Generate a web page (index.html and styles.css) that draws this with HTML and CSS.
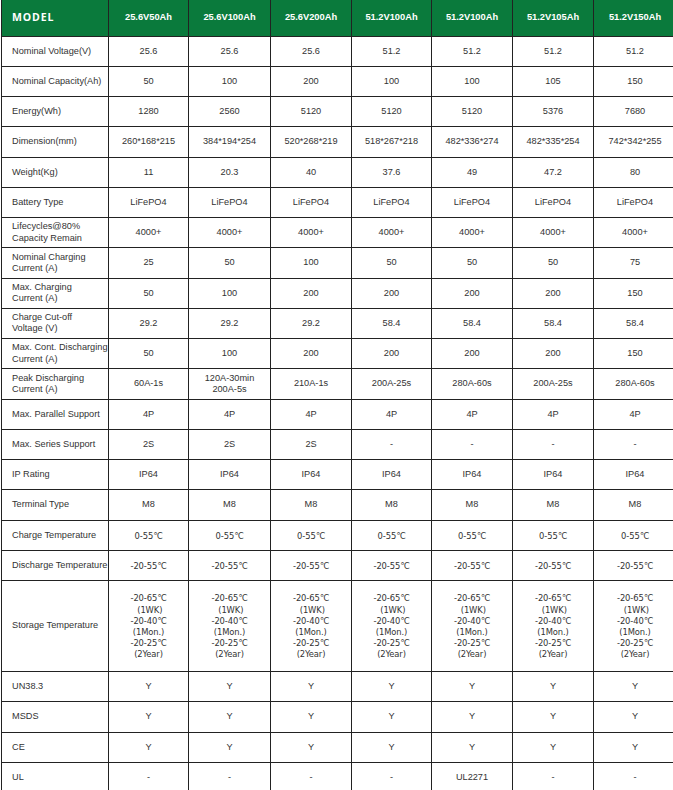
FILE: index.html
```html
<!DOCTYPE html>
<html lang="en">
<head>
<meta charset="utf-8">
<title>Battery Specifications</title>
<link rel="stylesheet" href="styles.css">
</head>
<body>
<table class="spec">
  <colgroup>
    <col class="c-label">
    <col class="c-a"><col class="c-b"><col class="c-c"><col class="c-d"><col class="c-e"><col class="c-f"><col class="c-g">
  </colgroup>
  <thead>
    <tr class="head">
      <th class="model">MODEL</th>
      <th>25.6V50Ah</th>
      <th>25.6V100Ah</th>
      <th>25.6V200Ah</th>
      <th>51.2V100Ah</th>
      <th>51.2V100Ah</th>
      <th>51.2V105Ah</th>
      <th>51.2V150Ah</th>
    </tr>
  </thead>
  <tbody>
    <tr><td>Nominal Voltage(V)</td><td>25.6</td><td>25.6</td><td>25.6</td><td>51.2</td><td>51.2</td><td>51.2</td><td>51.2</td></tr>
    <tr><td>Nominal Capacity(Ah)</td><td>50</td><td>100</td><td>200</td><td>100</td><td>100</td><td>105</td><td>150</td></tr>
    <tr><td>Energy(Wh)</td><td>1280</td><td>2560</td><td>5120</td><td>5120</td><td>5120</td><td>5376</td><td>7680</td></tr>
    <tr><td>Dimension(mm)</td><td>260*168*215</td><td>384*194*254</td><td>520*268*219</td><td>518*267*218</td><td>482*336*274</td><td>482*335*254</td><td>742*342*255</td></tr>
    <tr><td>Weight(Kg)</td><td>11</td><td>20.3</td><td>40</td><td>37.6</td><td>49</td><td>47.2</td><td>80</td></tr>
    <tr><td>Battery Type</td><td>LiFePO4</td><td>LiFePO4</td><td>LiFePO4</td><td>LiFePO4</td><td>LiFePO4</td><td>LiFePO4</td><td>LiFePO4</td></tr>
    <tr><td>Lifecycles@80%<br>Capacity Remain</td><td>4000+</td><td>4000+</td><td>4000+</td><td>4000+</td><td>4000+</td><td>4000+</td><td>4000+</td></tr>
    <tr><td>Nominal Charging<br>Current (A)</td><td>25</td><td>50</td><td>100</td><td>50</td><td>50</td><td>50</td><td>75</td></tr>
    <tr><td>Max. Charging<br>Current (A)</td><td>50</td><td>100</td><td>200</td><td>200</td><td>200</td><td>200</td><td>150</td></tr>
    <tr><td>Charge Cut-off<br>Voltage (V)</td><td>29.2</td><td>29.2</td><td>29.2</td><td>58.4</td><td>58.4</td><td>58.4</td><td>58.4</td></tr>
    <tr><td>Max. Cont. Discharging<br>Current (A)</td><td>50</td><td>100</td><td>200</td><td>200</td><td>200</td><td>200</td><td>150</td></tr>
    <tr><td>Peak Discharging<br>Current (A)</td><td>60A-1s</td><td>120A-30min<br>200A-5s</td><td>210A-1s</td><td>200A-25s</td><td>280A-60s</td><td>200A-25s</td><td>280A-60s</td></tr>
    <tr><td>Max. Parallel Support</td><td>4P</td><td>4P</td><td>4P</td><td>4P</td><td>4P</td><td>4P</td><td>4P</td></tr>
    <tr><td>Max. Series Support</td><td>2S</td><td>2S</td><td>2S</td><td>-</td><td>-</td><td>-</td><td>-</td></tr>
    <tr><td>IP Rating</td><td>IP64</td><td>IP64</td><td>IP64</td><td>IP64</td><td>IP64</td><td>IP64</td><td>IP64</td></tr>
    <tr><td>Terminal Type</td><td>M8</td><td>M8</td><td>M8</td><td>M8</td><td>M8</td><td>M8</td><td>M8</td></tr>
    <tr><td>Charge Temperature</td><td class="temp">0-55℃</td><td class="temp">0-55℃</td><td class="temp">0-55℃</td><td class="temp">0-55℃</td><td class="temp">0-55℃</td><td class="temp">0-55℃</td><td class="temp">0-55℃</td></tr>
    <tr><td>Discharge Temperature</td><td class="temp">-20-55℃</td><td class="temp">-20-55℃</td><td class="temp">-20-55℃</td><td class="temp">-20-55℃</td><td class="temp">-20-55℃</td><td class="temp">-20-55℃</td><td class="temp">-20-55℃</td></tr>
    <tr class="tall"><td>Storage Temperature</td>
      <td class="temp">-20-65℃<br>&nbsp;(1WK)<br>-20-40℃<br>(1Mon.)<br>-20-25℃<br>(2Year)</td>
      <td class="temp">-20-65℃<br>&nbsp;(1WK)<br>-20-40℃<br>(1Mon.)<br>-20-25℃<br>(2Year)</td>
      <td class="temp">-20-65℃<br>&nbsp;(1WK)<br>-20-40℃<br>(1Mon.)<br>-20-25℃<br>(2Year)</td>
      <td class="temp">-20-65℃<br>&nbsp;(1WK)<br>-20-40℃<br>(1Mon.)<br>-20-25℃<br>(2Year)</td>
      <td class="temp">-20-65℃<br>&nbsp;(1WK)<br>-20-40℃<br>(1Mon.)<br>-20-25℃<br>(2Year)</td>
      <td class="temp">-20-65℃<br>&nbsp;(1WK)<br>-20-40℃<br>(1Mon.)<br>-20-25℃<br>(2Year)</td>
      <td class="temp">-20-65℃<br>&nbsp;(1WK)<br>-20-40℃<br>(1Mon.)<br>-20-25℃<br>(2Year)</td>
    </tr>
    <tr><td>UN38.3</td><td>Y</td><td>Y</td><td>Y</td><td>Y</td><td>Y</td><td>Y</td><td>Y</td></tr>
    <tr><td>MSDS</td><td>Y</td><td>Y</td><td>Y</td><td>Y</td><td>Y</td><td>Y</td><td>Y</td></tr>
    <tr><td>CE</td><td>Y</td><td>Y</td><td>Y</td><td>Y</td><td>Y</td><td>Y</td><td>Y</td></tr>
    <tr><td>UL</td><td>-</td><td>-</td><td>-</td><td>-</td><td>UL2271</td><td>-</td><td>-</td></tr>
  </tbody>
</table>
</body>
</html>
```
FILE: styles.css
```css
html, body {
  margin: 0;
  padding: 0;
  background: #ffffff;
}

.spec {
  border-collapse: collapse;
  table-layout: fixed;
  width: 675px;
  margin-left: 1px;
  font-family: "Liberation Sans", Arial, sans-serif;
  font-size: 9.2px;
  color: #333333;
}

.c-label { width: 107px; }
.c-a { width: 80px; }
.c-b { width: 82px; }
.c-c { width: 81px; }
.c-d { width: 80px; }
.c-e { width: 81px; }
.c-f { width: 81px; }
.c-g { width: 83px; }

.spec th,
.spec td {
  border: 1px solid #222222;
  padding: 0;
  text-align: center;
  vertical-align: middle;
  line-height: 11.2px;
}

.spec tbody tr {
  height: 30.25px;
}

.spec tbody td:first-child {
  text-align: left;
  padding-left: 10px;
  padding-right: 0;
  white-space: nowrap;
}

.head {
  height: 36px;
}

.head th {
  background: #0a7a3c;
  color: #ffffff;
  font-weight: 700;
  font-size: 9.3px;
  border-top: none;
}

.head th.model {
  text-align: left;
  padding-left: 10px;
  font-family: "Open Sans", "Liberation Sans", sans-serif;
  font-size: 10.5px;
  letter-spacing: 0.9px;
}

.temp {
  font-family: "DejaVu Sans Condensed", "DejaVu Sans", sans-serif;
  font-size: 9.3px;
  line-height: 11px;
  letter-spacing: -0.1px;
}

.spec tbody tr.tall {
  height: 91px;
}
```
